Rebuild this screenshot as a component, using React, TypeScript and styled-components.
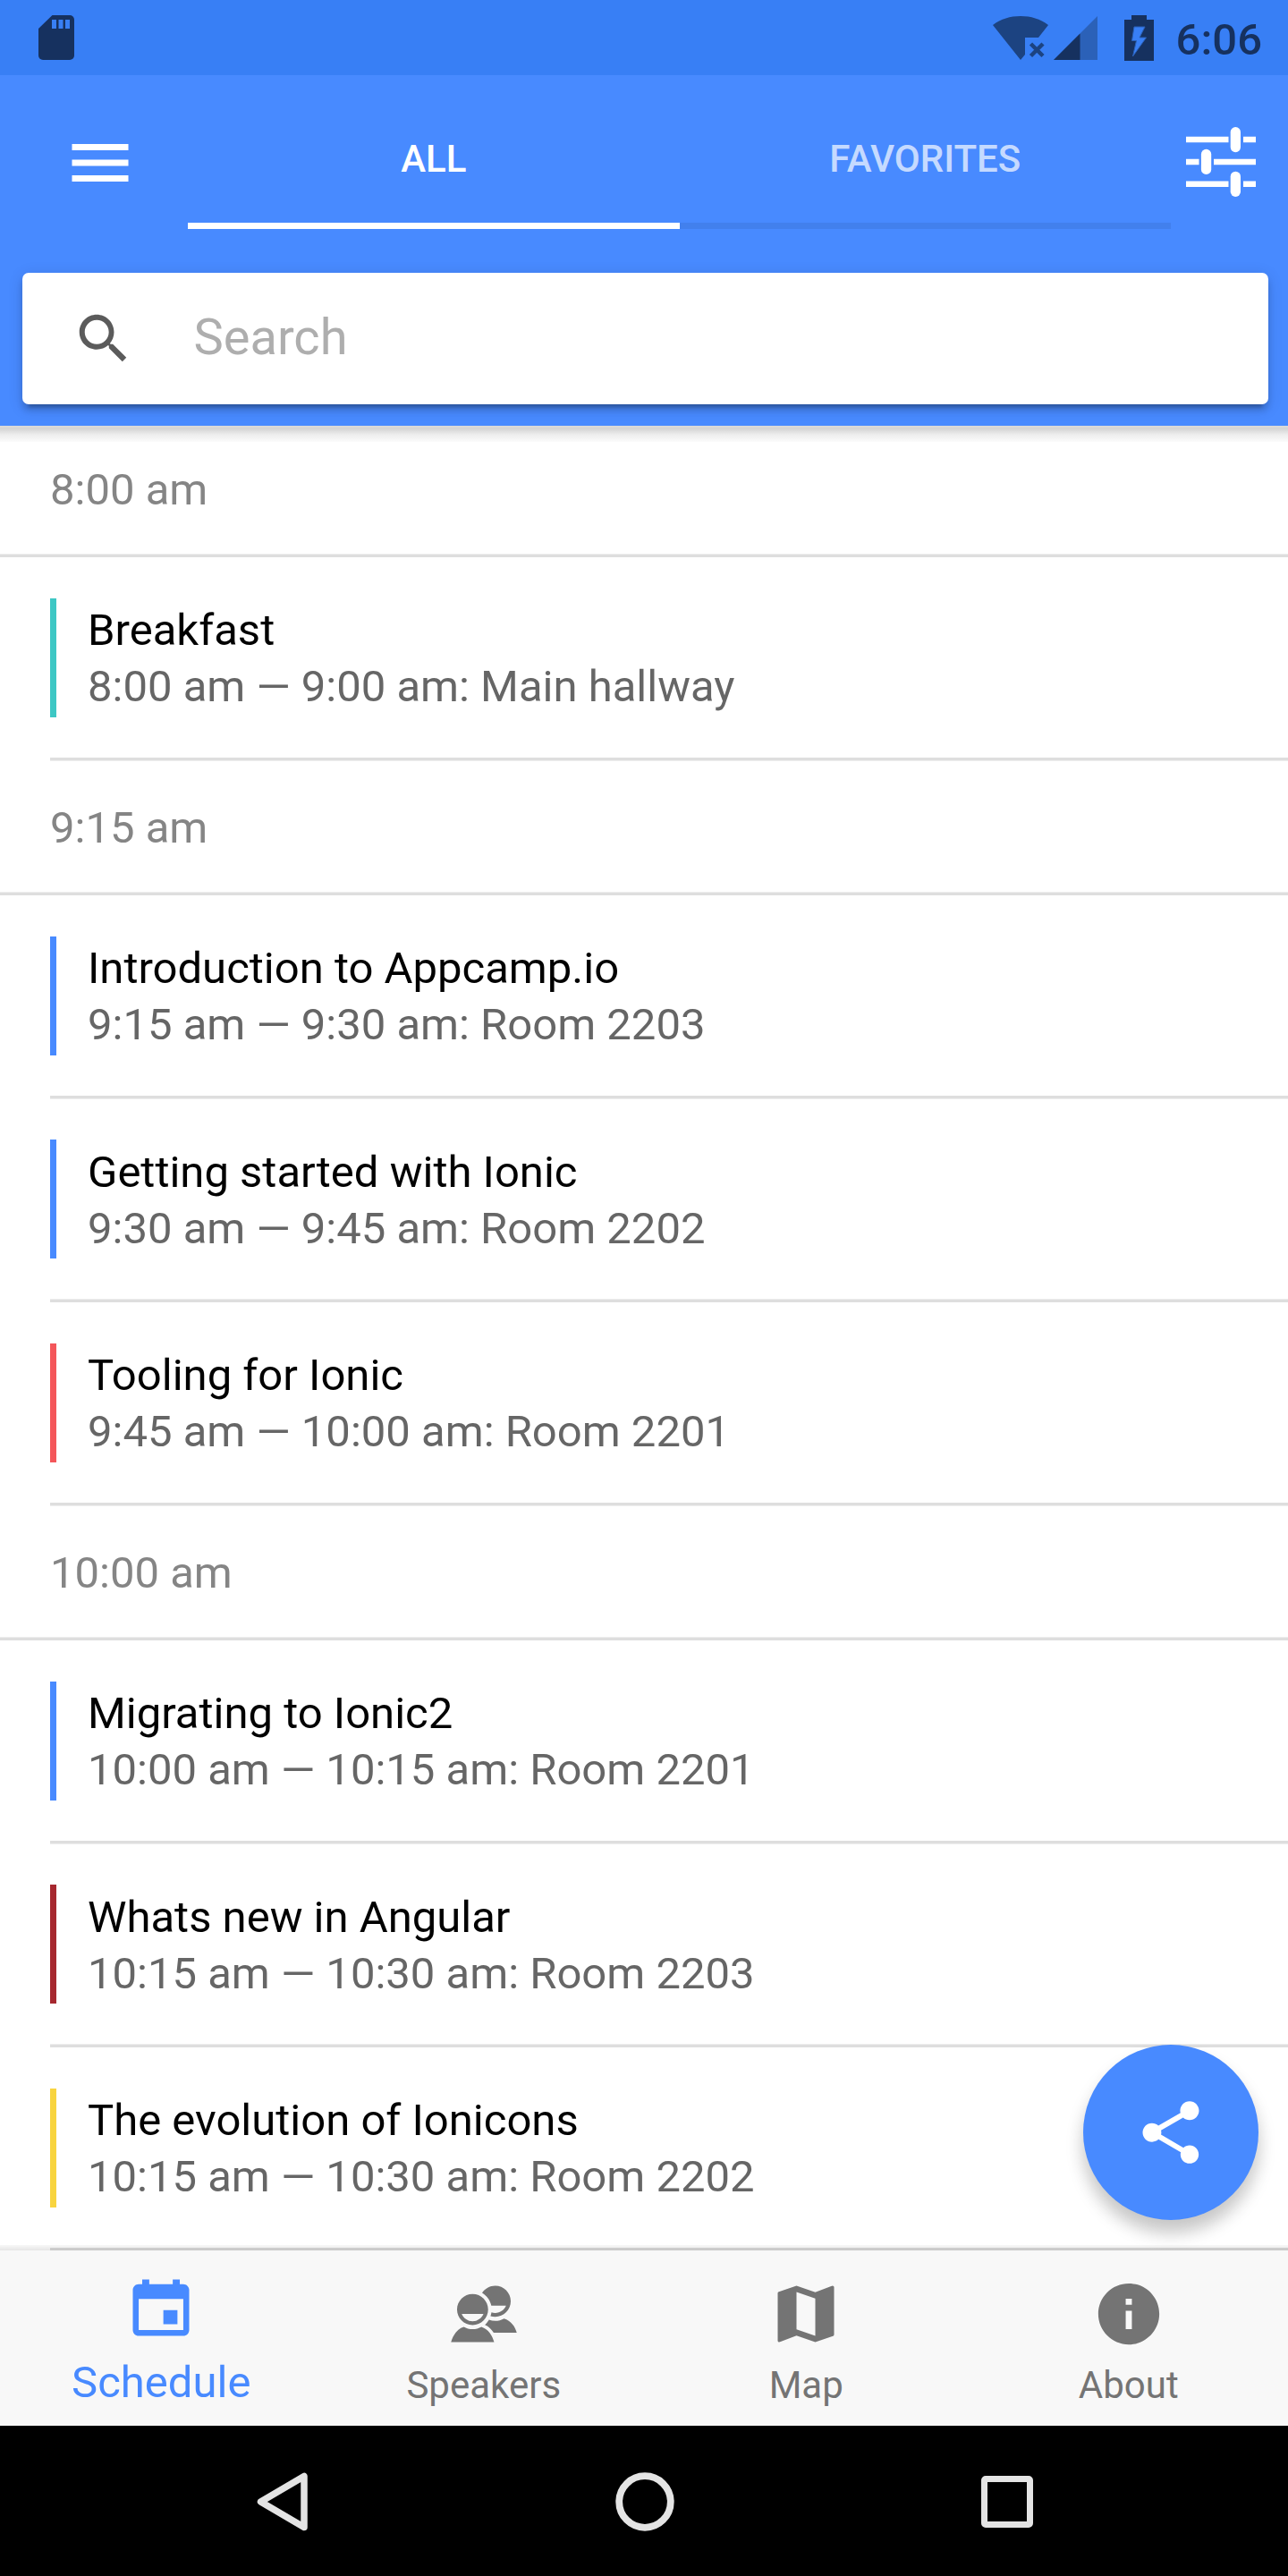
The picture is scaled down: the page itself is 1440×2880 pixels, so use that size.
import React from "react";
import styled, { createGlobalStyle } from "styled-components";
import {
  IoMdCalendar,
  IoMdContacts,
  IoMdInformationCircle,
  IoMdMap,
  IoMdMenu,
  IoMdSearch,
  IoMdShare,
} from "react-icons/io";

const GlobalStyle = createGlobalStyle`
  * { box-sizing: border-box; }
  body { margin: 0; font-family: Roboto, "Noto Sans", sans-serif; background: #fff; }
`;

const Screen = styled.div`
  display: flex;
  flex-direction: column;
  width: 1440px;
  height: 2880px;
  overflow: hidden;
  background: #fff;
`;

const StatusBar = styled.div`
  flex: none;
  display: flex;
  align-items: center;
  height: 84px;
  padding: 0 29px 0 43px;
  background: #387ff5;
  color: #16315f;
`;

const StatusIcons = styled.div`
  display: flex;
  align-items: center;
  margin-left: auto;
`;

const Clock = styled.span`
  margin-left: 25px;
  padding-top: 5px;
  font-size: 49px;
  line-height: 56px;
  font-weight: 500;
`;

const Header = styled.header`
  flex: none;
  position: relative;
  z-index: 2;
  height: 392px;
  background: #488aff;
  &::after {
    content: "";
    position: absolute;
    left: 0;
    right: 0;
    top: 100%;
    height: 18px;
    background: linear-gradient(rgba(0, 0, 0, 0.14), rgba(0, 0, 0, 0.17) 18%, rgba(0, 0, 0, 0.07) 55%, rgba(0, 0, 0, 0.015));
  }
`;

const Toolbar = styled.div`
  display: flex;
  align-items: center;
  height: 196px;
  color: #fff;
`;

const MenuButton = styled.div`
  display: flex;
  width: 210px;
  padding-left: 70px;
  font-size: 84px;
`;

const OptionsButton = styled.div`
  display: flex;
  padding: 0 0 3px 17px;
`;

const Segment = styled.div`
  display: flex;
  width: 1099px;
  height: 147px;
  margin-top: 1px;
`;

const SegmentTab = styled.div<{ $active?: boolean }>`
  flex: 1;
  display: flex;
  align-items: center;
  justify-content: center;
  padding-bottom: 4px;
  border-bottom: 7px solid ${(p) => (p.$active ? "#fff" : "rgba(0, 0, 0, 0.07)")};
  color: ${(p) => (p.$active ? "#fff" : "rgba(255, 255, 255, 0.7)")};
  font-size: 42px;
  font-weight: 500;
`;

const SearchBox = styled.div`
  display: flex;
  align-items: center;
  height: 147px;
  margin: 24.5px 22.5px 0 24.5px;
  border-radius: 7px;
  background: #fff;
  box-shadow: 0 7px 7px 0 rgba(0, 0, 0, 0.14), 0 10.5px 3.5px -7px rgba(0, 0, 0, 0.2), 0 3.5px 17.5px 0 rgba(0, 0, 0, 0.12);
`;

const SearchIcon = styled.div`
  display: flex;
  width: 192px;
  padding-left: 55.5px;
  font-size: 70px;
  color: #5b5b5b;
`;

const Placeholder = styled.span`
  padding-bottom: 2px;
  font-size: 56px;
  line-height: 70px;
  color: #aeaeae;
`;

const Content = styled.main`
  position: relative;
  flex: 1;
  min-height: 0;
`;

/* Rows are 3.5px-aligned, so every second divider carries its soft half pixel below instead of above. */
const Schedule = styled.div`
  margin-top: -3.5px;
  & > * {
    background: linear-gradient(#eeeeee 1px, #dedede 1px) left bottom / 100% 4px no-repeat;
  }
  & > :nth-child(even) {
    background-image: linear-gradient(#dedede 3px, #eeeeee 3px);
  }
`;

const TimeHeader = styled.div`
  display: flex;
  align-items: center;
  height: 150.5px;
  padding: 2px 0 3.5px 56px;
  font-size: 49px;
  color: #858585;
`;

const Session = styled.div`
  display: flex;
  align-items: center;
  height: 227.5px;
  margin-left: 56px;
  padding-bottom: 3.5px;
`;

const Track = styled.div<{ $color: string }>`
  height: 133px;
  padding: 4.75px 0 0 35px;
  border-left: 7px solid ${(p) => p.$color};
`;

const Title = styled.div`
  font-size: 49px;
  line-height: 63px;
  color: #000;
`;

const Detail = styled.div`
  font-size: 49px;
  line-height: 63px;
  color: #666;
`;

const ShareFab = styled.div`
  position: absolute;
  right: 33px;
  bottom: 34.5px;
  display: flex;
  align-items: center;
  justify-content: center;
  width: 196px;
  height: 196px;
  border-radius: 50%;
  background: #488aff;
  color: #fff;
  font-size: 84px;
  box-shadow: 0 14px 21px 0 rgba(0, 0, 0, 0.14), 0 14px 17.5px 0 rgba(0, 0, 0, 0.1);
  & > svg {
    margin-top: 1.5px;
  }
`;

const TabBar = styled.nav`
  flex: none;
  position: relative;
  display: flex;
  width: 1442px;
  height: 196px;
  background: #f8f8f8;
  &::before {
    content: "";
    position: absolute;
    left: 0;
    right: 0;
    bottom: 100%;
    height: 6px;
    background: linear-gradient(rgba(0, 0, 0, 0.03), rgba(0, 0, 0, 0.1));
  }
`;

const Tab = styled.div<{ $active?: boolean }>`
  flex: 1;
  display: flex;
  flex-direction: column;
  align-items: center;
  padding-top: ${(p) => (p.$active ? 21.5 : 28.5)}px;
  color: ${(p) => (p.$active ? "#488aff" : "#747474")};
  font-size: ${(p) => (p.$active ? 49 : 42)}px;
  line-height: 50px;
  & > svg {
    flex: none;
    width: 84px;
    height: 84px;
    margin-bottom: ${(p) => (p.$active ? 17.5 : 13.5)}px;
  }
`;

const SystemBar = styled.div`
  flex: none;
  display: flex;
  align-items: center;
  justify-content: space-between;
  height: 168px;
  padding: 1px 281.5px 0 282.5px;
  background: #000;
`;

const SdCard = () => (
  <svg width="40" height="50" viewBox="0 0 40 50">
    <path d="M15.500 0H35a5 5 0 0 1 5 5v40a5 5 0 0 1-5 5H5a5 5 0 0 1-5-5V15z" fill="#16315f" />
    <path d="M15 5h5v10h-5zM22.500 5h5v10h-5zM30 5h5v10h-5z" fill="#387ff5" />
  </svg>
);

const Wifi = () => (
  <svg width="62" height="50" viewBox="0 0 62 50">
    <path d="M0 11C9 4 19.500 1 31 1s22 3 31 10L51 25H36v19l-5 6z" fill="#1c4381" />
    <path d="M42.500 32l13.500 13.500M56 32L42.500 45.500" stroke="#1c4381" strokeWidth="4.500" />
  </svg>
);

const Signal = () => (
  <svg width="49" height="49" viewBox="0 0 49 49">
    <path d="M0 49L49 0v49z" fill="#2b61b8" />
    <path d="M0 49L29.500 19.500V49z" fill="#16315f" />
  </svg>
);

const Battery = () => (
  <svg width="33" height="51" viewBox="0 0 33 51">
    <path d="M8 0h17v5h8v46H0V5h8z" fill="#16315f" />
    <path d="M11 13h12l-6 12h7.500L9.500 46l4-17.500H8.500z" fill="#387ff5" stroke="#2b61b8" strokeWidth="1" />
  </svg>
);

const Options = () => (
  <svg width="78" height="78" viewBox="0 0 78 78" fill="#fff">
    <path d="M0 10.800h47.500v6.500H0zM64 10.800h14v6.500H64zM0 35.700h14.500v6.500H0zM31 35.700h47v6.500H31zM0 60.500h47.500v6.500H0zM64 60.500h14v6.500H64z" />
    <rect x="49.700" y="0" width="11.300" height="28.200" rx="5.600" />
    <rect x="16.900" y="24.800" width="11.300" height="28.200" rx="5.600" />
    <rect x="49.700" y="49.700" width="11.300" height="28.200" rx="5.600" />
  </svg>
);

const BackKey = () => (
  <svg width="66" height="66" viewBox="0 0 66 66">
    <path d="M57 4.500v57L8.500 33z" fill="none" stroke="#e4e4e4" strokeWidth="7.500" strokeLinejoin="round" />
  </svg>
);

const HomeKey = () => (
  <svg width="66" height="66" viewBox="0 0 66 66">
    <circle cx="33" cy="33" r="28.800" fill="none" stroke="#e4e4e4" strokeWidth="7.800" />
  </svg>
);

const RecentKey = () => (
  <svg width="66" height="66" viewBox="0 0 66 66">
    <rect x="7.500" y="7.500" width="51" height="51" rx="1.500" fill="none" stroke="#e4e4e4" strokeWidth="7" />
  </svg>
);

const groups = [
  {
    time: "8:00 am",
    sessions: [{ title: "Breakfast", detail: "8:00 am — 9:00 am: Main hallway", color: "#3dc7c4" }],
  },
  {
    time: "9:15 am",
    sessions: [
      { title: "Introduction to Appcamp.io", detail: "9:15 am — 9:30 am: Room 2203", color: "#488aff" },
      { title: "Getting started with Ionic", detail: "9:30 am — 9:45 am: Room 2202", color: "#488aff" },
      { title: "Tooling for Ionic", detail: "9:45 am — 10:00 am: Room 2201", color: "#f4565a" },
    ],
  },
  {
    time: "10:00 am",
    sessions: [
      { title: "Migrating to Ionic2", detail: "10:00 am — 10:15 am: Room 2201", color: "#488aff" },
      { title: "Whats new in Angular", detail: "10:15 am — 10:30 am: Room 2203", color: "#a6282f" },
      { title: "The evolution of Ionicons", detail: "10:15 am — 10:30 am: Room 2202", color: "#f8d43f" },
    ],
  },
];

const tabs = [
  { label: "Schedule", Icon: IoMdCalendar, active: true },
  { label: "Speakers", Icon: IoMdContacts },
  { label: "Map", Icon: IoMdMap },
  { label: "About", Icon: IoMdInformationCircle },
];

const WifiSlot = styled.span`
  display: flex;
  margin-right: 6px;
`;

const BatterySlot = styled.span`
  display: flex;
  margin-left: 30px;
`;

export default function App() {
  return (
    <Screen>
      <GlobalStyle />
      <StatusBar>
        <SdCard />
        <StatusIcons>
          <WifiSlot>
            <Wifi />
          </WifiSlot>
          <Signal />
          <BatterySlot>
            <Battery />
          </BatterySlot>
          <Clock>6:06</Clock>
        </StatusIcons>
      </StatusBar>
      <Header>
        <Toolbar>
          <MenuButton>
            <IoMdMenu />
          </MenuButton>
          <Segment>
            <SegmentTab $active>ALL</SegmentTab>
            <SegmentTab>FAVORITES</SegmentTab>
          </Segment>
          <OptionsButton>
            <Options />
          </OptionsButton>
        </Toolbar>
        <SearchBox>
          <SearchIcon>
            <IoMdSearch />
          </SearchIcon>
          <Placeholder>Search</Placeholder>
        </SearchBox>
      </Header>
      <Content>
        <Schedule>
          {groups.map((group) => (
            <React.Fragment key={group.time}>
              <TimeHeader>{group.time}</TimeHeader>
              {group.sessions.map((s) => (
                <Session key={s.title}>
                  <Track $color={s.color}>
                    <Title>{s.title}</Title>
                    <Detail>{s.detail}</Detail>
                  </Track>
                </Session>
              ))}
            </React.Fragment>
          ))}
        </Schedule>
        <ShareFab>
          <IoMdShare />
        </ShareFab>
      </Content>
      <TabBar>
        {tabs.map(({ label, Icon, active }) => (
          <Tab key={label} $active={active}>
            <Icon />
            {label}
          </Tab>
        ))}
      </TabBar>
      <SystemBar>
        <BackKey />
        <HomeKey />
        <RecentKey />
      </SystemBar>
    </Screen>
  );
}
